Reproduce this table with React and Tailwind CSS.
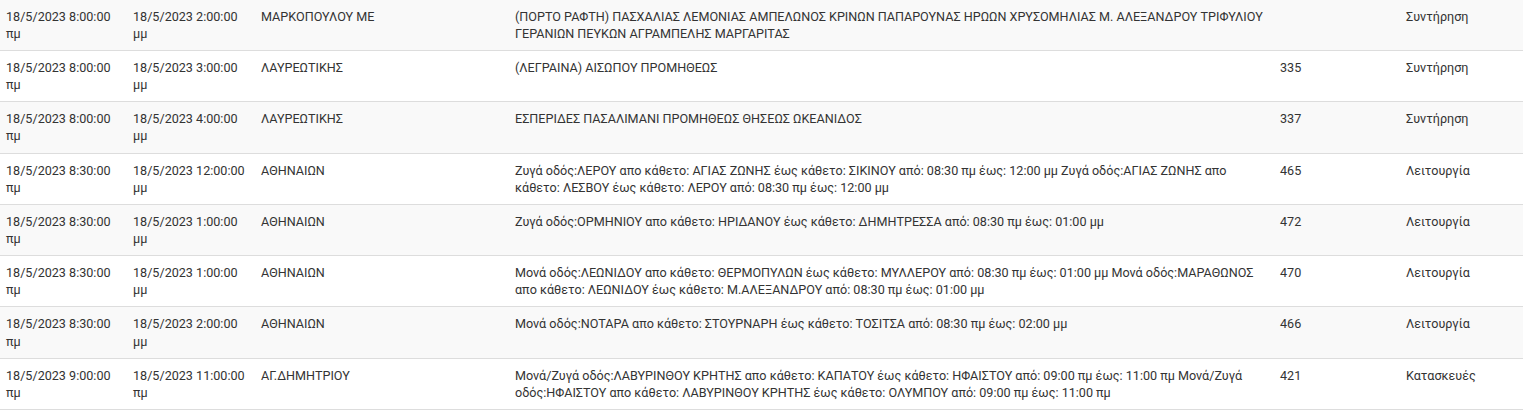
import React from 'react';

// Road works schedule table (striped rows, Bootstrap-like look)
const rows = [
  {
    from: '18/5/2023 8:00:00 πμ',
    to: '18/5/2023 2:00:00 μμ',
    area: 'ΜΑΡΚΟΠΟΥΛΟΥ ΜΕ',
    desc: '(ΠΟΡΤΟ ΡΑΦΤΗ) ΠΑΣΧΑΛΙΑΣ ΛΕΜΟΝΙΑΣ ΑΜΠΕΛΩΝΟΣ ΚΡΙΝΩΝ ΠΑΠΑΡΟΥΝΑΣ ΗΡΩΩΝ ΧΡΥΣΟΜΗΛΙΑΣ Μ. ΑΛΕΞΑΝΔΡΟΥ ΤΡΙΦΥΛΙΟΥ ΓΕΡΑΝΙΩΝ ΠΕΥΚΩΝ ΑΓΡΑΜΠΕΛΗΣ ΜΑΡΓΑΡΙΤΑΣ',
    code: '',
    type: 'Συντήρηση',
  },
  {
    from: '18/5/2023 8:00:00 πμ',
    to: '18/5/2023 3:00:00 μμ',
    area: 'ΛΑΥΡΕΩΤΙΚΗΣ',
    desc: '(ΛΕΓΡΑΙΝΑ) ΑΙΣΩΠΟΥ ΠΡΟΜΗΘΕΩΣ',
    code: '335',
    type: 'Συντήρηση',
  },
  {
    from: '18/5/2023 8:00:00 πμ',
    to: '18/5/2023 4:00:00 μμ',
    area: 'ΛΑΥΡΕΩΤΙΚΗΣ',
    desc: 'ΕΣΠΕΡΙΔΕΣ ΠΑΣΑΛΙΜΑΝΙ ΠΡΟΜΗΘΕΩΣ ΘΗΣΕΩΣ ΩΚΕΑΝΙΔΟΣ',
    code: '337',
    type: 'Συντήρηση',
  },
  {
    from: '18/5/2023 8:30:00 πμ',
    to: '18/5/2023 12:00:00 μμ',
    area: 'ΑΘΗΝΑΙΩΝ',
    desc: 'Ζυγά οδός:ΛΕΡΟΥ απο κάθετο: ΑΓΙΑΣ ΖΩΝΗΣ έως κάθετο: ΣΙΚΙΝΟΥ από: 08:30 πμ έως: 12:00 μμ Ζυγά οδός:ΑΓΙΑΣ ΖΩΝΗΣ απο κάθετο: ΛΕΣΒΟΥ έως κάθετο: ΛΕΡΟΥ από: 08:30 πμ έως: 12:00 μμ',
    code: '465',
    type: 'Λειτουργία',
  },
  {
    from: '18/5/2023 8:30:00 πμ',
    to: '18/5/2023 1:00:00 μμ',
    area: 'ΑΘΗΝΑΙΩΝ',
    desc: 'Ζυγά οδός:ΟΡΜΗΝΙΟΥ απο κάθετο: ΗΡΙΔΑΝΟΥ έως κάθετο: ΔΗΜΗΤΡΕΣΣΑ από: 08:30 πμ έως: 01:00 μμ',
    code: '472',
    type: 'Λειτουργία',
  },
  {
    from: '18/5/2023 8:30:00 πμ',
    to: '18/5/2023 1:00:00 μμ',
    area: 'ΑΘΗΝΑΙΩΝ',
    desc: 'Μονά οδός:ΛΕΩΝΙΔΟΥ απο κάθετο: ΘΕΡΜΟΠΥΛΩΝ έως κάθετο: ΜΥΛΛΕΡΟΥ από: 08:30 πμ έως: 01:00 μμ Μονά οδός:ΜΑΡΑΘΩΝΟΣ απο κάθετο: ΛΕΩΝΙΔΟΥ έως κάθετο: Μ.ΑΛΕΞΑΝΔΡΟΥ από: 08:30 πμ έως: 01:00 μμ',
    code: '470',
    type: 'Λειτουργία',
  },
  {
    from: '18/5/2023 8:30:00 πμ',
    to: '18/5/2023 2:00:00 μμ',
    area: 'ΑΘΗΝΑΙΩΝ',
    desc: 'Μονά οδός:ΝΟΤΑΡΑ απο κάθετο: ΣΤΟΥΡΝΑΡΗ έως κάθετο: ΤΟΣΙΤΣΑ από: 08:30 πμ έως: 02:00 μμ',
    code: '466',
    type: 'Λειτουργία',
  },
  {
    from: '18/5/2023 9:00:00 πμ',
    to: '18/5/2023 11:00:00 πμ',
    area: 'ΑΓ.ΔΗΜΗΤΡΙΟΥ',
    desc: 'Μονά/Ζυγά οδός:ΛΑΒΥΡΙΝΘΟΥ ΚΡΗΤΗΣ απο κάθετο: ΚΑΠΑΤΟΥ έως κάθετο: ΗΦΑΙΣΤΟΥ από: 09:00 πμ έως: 11:00 πμ Μονά/Ζυγά οδός:ΗΦΑΙΣΤΟΥ απο κάθετο: ΛΑΒΥΡΙΝΘΟΥ ΚΡΗΤΗΣ έως κάθετο: ΟΛΥΜΠΟΥ από: 09:00 πμ έως: 11:00 πμ',
    code: '421',
    type: 'Κατασκευές',
  },
];

export default function App() {
  return (
    <div className="w-[1523px] h-[412px] overflow-hidden bg-white font-['Roboto',sans-serif] text-[12.6px] leading-[17.14px] text-[#333]">
      <div className="-mt-[1.3px] border-b border-[#ddd]">
        {rows.map((r, idx) => (
          <div
            key={idx}
            className={`grid grid-cols-[127px_128px_254px_765px_126px_1fr] border-t border-[#ddd] ${idx % 2 === 0 ? 'bg-[#f9f9f9]' : 'bg-white'}`}
          >
            <div className="pl-[6px] pr-[6px] py-2 min-h-[50.3px]">{r.from}</div>
            <div className="pl-[6px] pr-[6px] py-2">{r.to}</div>
            <div className="pl-[6px] pr-[6px] py-2">{r.area}</div>
            <div className="pl-[6px] pr-[6px] py-2">{r.desc}</div>
            <div className="pl-[6px] pr-[6px] py-2">{r.code}</div>
            <div className="pl-[6px] pr-[6px] py-2">{r.type}</div>
          </div>
        ))}
      </div>
    </div>
  );
}
